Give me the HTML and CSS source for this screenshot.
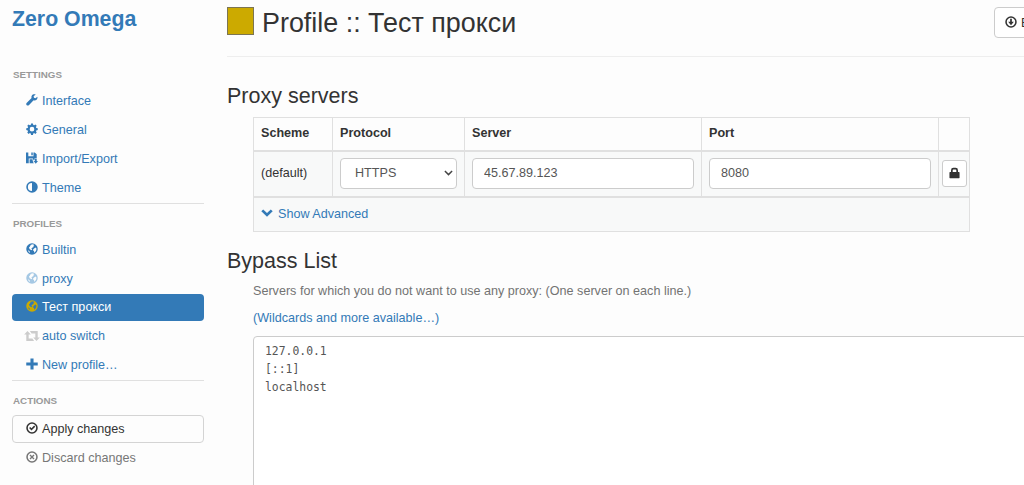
FILE: index.html
```html
<!DOCTYPE html>
<html lang="en">
<head>
    <meta charset="UTF-8">
    <meta name="viewport" content="width=device-width, initial-scale=1.0">
    <title>Zero Omega</title>
    <link rel="stylesheet" href="styles.css">
</head>
<body>
    <!-- shared icon shapes -->
    <svg class="icon-defs" width="0" height="0">
        <symbol id="globe" viewBox="0 0 14 14">
            <path fill-rule="evenodd" d="M7 .3a6.700 6.700 0 1 0 0 13.400a6.700 6.700 0 0 0 0-13.400zM5.600 2L8 1.500L9.700 2.300L8.600 3.600L8.900 4.800L7.200 5.600L6.200 6.800L7.300 7.600L6.600 8.500L4.300 7.200L3.500 5.300L4.600 4.200zM9.800 6L11.200 5.200L12.200 6.500L12 8.600L10.700 10.600L9.300 11.300L9.500 9.600L8.200 8.600L8.500 7.200zM2.300 8.400L4 9.400L4.800 11.600L3.200 10.400z"/>
        </symbol>
    </svg>

    <div class="layout">
        <nav class="sidebar">
            <h1 class="brand">Zero Omega</h1>

            <ul class="nav">
                <li class="nav-header">Settings</li>
                <li><a href="#">
                    <svg class="icon" viewBox="0 0 14 14"><path d="M13.300 3.200L11 4.900L9.300 4.400L8.900 2.700L11.300.6C9.600 0 7.500.5 6.700 2.100C6.200 3 6.300 4 6.500 4.700L.7 10.400C0 11.200.2 12.400.9 13C1.600 13.700 2.600 13.600 3.300 13L8.900 7.300C10.300 7.800 11.900 7.300 12.800 6.100C13.500 5.100 13.600 4.100 13.300 3.200z"/></svg>
                    Interface</a></li>
                <li><a href="#">
                    <svg class="icon" viewBox="0 0 14 14"><path fill-rule="evenodd" d="M5.900.5h2.200l.4 1.700 1 .4 1.500-.9 1.500 1.500-.9 1.500.4 1 1.700.4v2.200l-1.700.4-.4 1 .9 1.500-1.500 1.500-1.500-.9-1 .4-.4 1.700H5.900l-.4-1.700-1-.4-1.500.9-1.500-1.500.9-1.500-.4-1L.3 8.300V6.100L2 5.700l.4-1-.9-1.500L3 1.700l1.500.9 1-.4zM7 4.500a2.700 2.700 0 1 0 0 5.400 2.700 2.700 0 0 0 0-5.400z"/></svg>
                    General</a></li>
                <li><a href="#">
                    <svg class="icon" viewBox="0 0 14 14"><path d="M0 .5h2.700v4.400h6V.5h1.500l2.300 2v4.700H10V9H8.200V7.500H3.200v5.500H0zM6.200.5h1.700v3.300H6.200zM4.200 8.600h3.500v1.500h1.200l-1 1.200 1.300 1.700h-5zM10.300 8h2.200v2.500h1.500L11.400 13.700 8.900 10.500h1.400z"/></svg>
                    Import/Export</a></li>
                <li><a href="#">
                    <svg class="icon" viewBox="0 0 14 14"><path fill-rule="evenodd" d="M7 .3a6.700 6.700 0 1 0 0 13.400 6.700 6.700 0 0 0 0-13.400zM7 2.200v9.600a4.800 4.800 0 0 1 0-9.600z"/></svg>
                    Theme</a></li>
                <li class="divider"></li>

                <li class="nav-header">Profiles</li>
                <li><a href="#"><svg class="icon"><use href="#globe"/></svg> Builtin</a></li>
                <li><a href="#"><svg class="icon icon-light"><use href="#globe"/></svg> proxy</a></li>
                <li class="active"><a href="#"><svg class="icon icon-gold"><use href="#globe"/></svg> Тест прокси</a></li>
                <li><a href="#">
                    <svg class="icon icon-wide icon-gray" viewBox="0 0 17 13"><path d="M3.600 1L7.200 5H4.900v4.300h4l1.900 2.700H2.300V5H0zM6.200 1h8.500v7H17L13.400 12 9.800 8h2.300V3.700H8.100z"/></svg>
                    auto switch</a></li>
                <li><a href="#">
                    <svg class="icon" viewBox="0 0 14 14"><path d="M5.200.6h3.600v4.600h4.900v3.600H8.800v4.600H5.200V8.800H.3V5.200h4.900z"/></svg>
                    New profile…</a></li>
                <li class="divider"></li>

                <li class="nav-header">Actions</li>
                <li class="apply"><a href="#">
                    <svg class="icon" viewBox="0 0 14 14"><circle class="ring" cx="7" cy="7" r="5.800"/><path d="M3.600 7l1.300-1.300 1.500 1.500 3.100-3.100 1.300 1.300-4.400 4.500z"/></svg>
                    Apply changes</a></li>
                <li class="discard"><a href="#">
                    <svg class="icon" viewBox="0 0 14 14"><circle class="ring" cx="7" cy="7" r="5.800"/><path d="M5.200 4.100L7 5.900l1.800-1.800 1.100 1.100L8.100 7l1.800 1.800-1.100 1.100L7 8.100 5.200 9.900 4.100 8.800 5.900 7 4.100 5.200z"/></svg>
                    Discard changes</a></li>
            </ul>
        </nav>

        <main class="content">
            <header class="page-header">
                <span class="color-box"></span>
                <h2>Profile :: Тест прокси</h2>
                <button class="btn export">
                    <svg class="icon" viewBox="0 0 14 14"><circle class="ring" cx="7" cy="7" r="5.800"/><path d="M6 3.300h2v3.500h2.300L7 10.800 3.700 6.800H6z"/></svg>
                    Export PAC
                </button>
            </header>

            <section>
                <h3>Proxy servers</h3>
                <table class="servers">
                    <thead>
                        <tr>
                            <th class="col-scheme">Scheme</th>
                            <th class="col-protocol">Protocol</th>
                            <th class="col-server">Server</th>
                            <th class="col-port">Port</th>
                            <th class="col-auth"></th>
                        </tr>
                    </thead>
                    <tbody>
                        <tr class="server-row">
                            <td>(default)</td>
                            <td>
                                <div class="form-control select">
                                    <span>HTTPS</span>
                                    <svg class="caret" viewBox="0 0 10 6"><path d="M1 .8l4 4 4-4"/></svg>
                                </div>
                            </td>
                            <td><input class="form-control" type="text" value="45.67.89.123"></td>
                            <td><input class="form-control" type="text" value="8080"></td>
                            <td class="auth">
                                <button class="btn lock">
                                    <svg viewBox="0 0 12 12"><path fill-rule="evenodd" d="M1 5h1.200V3A2.600 2.600 0 0 1 4.800.4h2.400a2.600 2.600 0 0 1 2.600 2.600V5H11a.5.5 0 0 1 .5.500v5.700a.5.5 0 0 1-.5.500H1a.5.5 0 0 1-.5-.500V5.500A.5.5 0 0 1 1 5zM4 5h4V3.200a.9.9 0 0 0-.9-.9H4.900a.9.9 0 0 0-.9.900z"/></svg>
                                </button>
                            </td>
                        </tr>
                        <tr class="advanced-row">
                            <td colspan="5"><a href="#">
                                <svg class="chevron" viewBox="0 0 12 8"><path d="M.3 2.200L2.200.4 6 4 9.800.4l1.900 1.800L6 7.800z"/></svg>
                                Show Advanced</a></td>
                        </tr>
                    </tbody>
                </table>
            </section>

            <section>
                <h3>Bypass List</h3>
                <p class="help">Servers for which you do not want to use any proxy: (One server on each line.)</p>
                <p class="help"><a href="#">(Wildcards and more available…)</a></p>
                <textarea class="bypass" spellcheck="false">127.0.0.1
[::1]
localhost</textarea>
            </section>
        </main>
    </div>
</body>
</html>
```

FILE: styles.css
```css
* {
    box-sizing: border-box;
}

body {
    margin: 0;
    height: 485px;
    overflow: hidden;
    background-color: #fdfdfd;
    color: #333;
    font-family: "Liberation Sans", Arial, sans-serif;
    font-size: 12.6px;
    line-height: 18px;
}

a {
    color: #337ab7;
    text-decoration: none;
}

h1, h2, h3, p, ul {
    margin: 0;
    padding: 0;
    font-weight: normal;
}

.icon-defs {
    display: block;
}

.layout {
    display: flex;
    height: 485px;
    overflow: hidden;
}

/* sidebar */

.sidebar {
    flex: none;
    width: 227px;
    padding: 6px 23px 0 12px;
}

.brand {
    height: 60px;
    color: #337ab7;
    font-size: 21.3px;
    font-weight: bold;
    line-height: 26px;
}

.nav {
    list-style: none;
}

.nav li {
    margin-bottom: 1.8px;
}

.nav a {
    display: flex;
    align-items: center;
    gap: 4px;
    height: 26.9px;
    padding-left: 14px;
    border-radius: 4px;
    white-space: nowrap;
}

.nav .nav-header {
    height: 20px;
    margin-bottom: 2px;
    padding-left: 1px;
    color: #999;
    font-size: 9.8px;
    font-weight: bold;
    line-height: 18px;
    text-transform: uppercase;
}

.nav .divider {
    height: 1px;
    margin: 1px 0 10.8px;
    background-color: #e0e0e0;
}

.nav .active a {
    background-color: #337ab7;
    color: #fff;
}

.nav .apply {
    margin-top: 3.2px;
}

.nav .apply a {
    height: 28px;
    padding-left: 13px;
    border: 1px solid #d4d4d4;
    color: #333;
}

.nav .discard a {
    color: #777;
}

.icon {
    flex: none;
    width: 12px;
    height: 12px;
    margin-bottom: 2px;
    fill: currentColor;
}

.icon-wide {
    width: 16px;
    margin: 0 -2px 1px;
}

.nav .icon-light {
    color: #a5c8e4;
}

.nav .icon-gold {
    color: #ccaa00;
}

.nav .icon-gray {
    color: #ccc;
}

.ring {
    fill: none;
    stroke: currentColor;
    stroke-width: 1.8;
}

/* main content */

.content {
    flex: none;
    width: 880px;
}

.page-header {
    display: flex;
    height: 57px;
    padding-top: 7px;
    border-bottom: 1px solid #eee;
}

.color-box {
    width: 27px;
    height: 28px;
    margin-right: 8px;
    border: 1px solid #7c7552;
    background-color: #ccaa00;
}

h2 {
    width: 732px;
    font-size: 26.9px;
    line-height: 32px;
}

.btn {
    display: flex;
    align-items: center;
    border: 1px solid #ccc;
    border-radius: 4px;
    background-color: #fff;
    color: #333;
    font-family: inherit;
    font-size: 12.6px;
}

.export {
    gap: 4px;
    height: 31px;
    padding: 0 10px;
}

h3 {
    font-size: 21.5px;
    line-height: 24px;
}

section h3 {
    padding-top: 27px;
    height: 60px;
}

section + section h3 {
    padding-top: 17px;
    height: 50px;
}

.servers {
    width: 717px;
    margin-left: 26px;
    border-collapse: collapse;
    table-layout: fixed;
}

.servers th, .servers td {
    padding: 0 7px;
    border: 1px solid #e0e0e0;
    text-align: left;
}

.servers th {
    height: 33px;
    padding-bottom: 1px;
    border-bottom: 2px solid #e0e0e0;
}

.servers td {
    background-color: #f8f9f9;
}

.col-scheme {
    width: 79px;
}

.col-protocol {
    width: 132px;
}

.col-server, .col-port {
    width: 237px;
}

.server-row td {
    height: 46px;
    padding-bottom: 1px;
    border-bottom: 2px solid #e0e0e0;
}

.advanced-row td {
    height: 35px;
}

.advanced-row a {
    display: flex;
    align-items: center;
    gap: 5px;
}

.chevron {
    width: 12px;
    height: 8px;
    margin-bottom: 3px;
    fill: currentColor;
}

.form-control {
    display: flex;
    width: 100%;
    height: 31px;
    padding: 0 11px;
    border: 1px solid #ccc;
    border-radius: 4px;
    background-color: #fff;
    color: #555;
    font-family: inherit;
    font-size: 12.6px;
}

.select {
    align-items: center;
    justify-content: space-between;
    padding: 0 3px 0 14px;
}

.caret {
    width: 9px;
    height: 6px;
    fill: none;
    stroke: #444;
    stroke-width: 1.6;
}

.servers .auth {
    padding: 0 3px;
}

.lock {
    justify-content: center;
    width: 25px;
    height: 27px;
    padding: 0 1px 2px 0;
    border-radius: 3px;
}

.lock svg {
    width: 11px;
    height: 12px;
    fill: currentColor;
}

.help {
    height: 27px;
    padding-left: 26px;
    color: #737373;
}

.bypass {
    display: block;
    width: 840px;
    height: 260px;
    margin-left: 26px;
    padding: 5px 11px;
    border: 1px solid #ccc;
    border-radius: 4px;
    background-color: #fff;
    color: #555;
    font-family: "DejaVu Sans Mono", monospace;
    font-size: 11.4px;
    line-height: 18px;
    resize: none;
}
```
